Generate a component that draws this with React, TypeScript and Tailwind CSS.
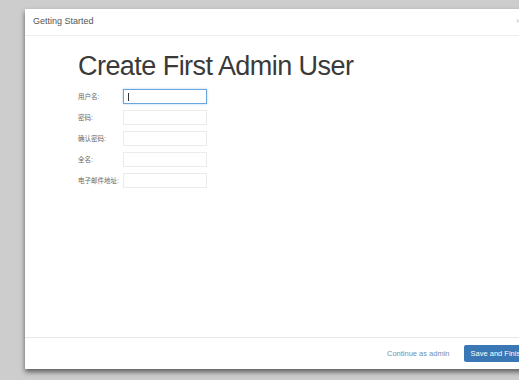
import React from "react";

const fields = ["用户名:", "密码:", "确认密码:", "全名:", "电子邮件地址:"];

const Field = ({ label, focused }: { label: string; focused?: boolean }) => (
    <div className="flex items-center h-[15px]">
        <label className="w-[45px] shrink-0 text-[6.5px] text-[#666] whitespace-nowrap">{label}</label>
        <div
            className={`w-[84px] h-[15px] bg-white flex items-center pl-[4px] ${
                focused
                    ? "border border-[#6aa6dc] shadow-[0_0_2px_rgba(102,175,233,0.6)]"
                    : "border border-[#ebebeb]"
            }`}
        >
            {focused && <span className="w-px h-[8px] bg-[#333]" />}
        </div>
    </div>
);

export default function App() {
    return (
        <div
            className="w-[519px] h-[380px] bg-[#cdcdcd] overflow-hidden pt-[9px] pl-[25px]"
            style={{ fontFamily: '"Liberation Sans", "Noto Sans CJK SC", sans-serif' }}
        >
            <div className="w-[504px] h-[360px] bg-white flex flex-col shadow-[0_3px_5px_rgba(0,0,0,0.55)] overflow-hidden">
                <div className="h-[27px] shrink-0 flex items-center justify-between pl-[8px] pr-[8px] border-b border-[#eeeeee]">
                    <span className="text-[9px] text-[#555]">Getting Started</span>
                    <span className="text-[9px] text-[#ccc]">×</span>
                </div>
                <div className="flex-1 pl-[53px] pt-[17px]">
                    <h1 className="text-[27px] leading-none text-[#3a3a3a] tracking-[-0.55px]">
                        Create First Admin User
                    </h1>
                    <div className="mt-[9px] flex flex-col gap-[6px]">
                        {fields.map((f, i) => (
                            <Field key={f} label={f} focused={i === 0} />
                        ))}
                    </div>
                </div>
                <div className="h-[32px] shrink-0 border-t border-[#e8e8e8] flex items-center pl-[362px] gap-[14px]">
                    <span className="text-[7.5px] text-[#6f8fb4] whitespace-nowrap">Continue as admin</span>
                    <button className="shrink-0 h-[17px] px-[7px] bg-[#3a78b5] rounded-[2px] text-white text-[7.5px] whitespace-nowrap">
                        Save and Finish
                    </button>
                </div>
            </div>
        </div>
    );
}
